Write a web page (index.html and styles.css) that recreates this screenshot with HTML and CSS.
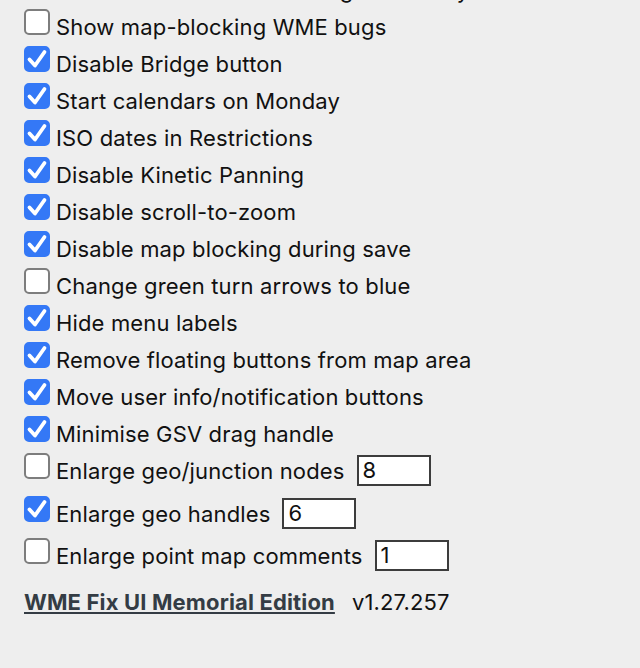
FILE: index.html
```html
<!DOCTYPE html>
<html>
<head>
<meta charset="utf-8">
<link rel="stylesheet" href="styles.css">
</head>
<body>
<div class="panel">
  <div class="row"><span class="box"></span><span class="label">Show unused WME ruler legend on key when hidden via the settings</span></div>
  <div class="row"><span class="box"></span><span class="label">Show map-blocking WME bugs</span></div>
  <div class="row"><span class="box on"><svg viewBox="0 0 26 26"><polyline points="5.5,13.5 11,19.5 20.5,6"/></svg></span><span class="label">Disable Bridge button</span></div>
  <div class="row"><span class="box on"><svg viewBox="0 0 26 26"><polyline points="5.5,13.5 11,19.5 20.5,6"/></svg></span><span class="label">Start calendars on Monday</span></div>
  <div class="row"><span class="box on"><svg viewBox="0 0 26 26"><polyline points="5.5,13.5 11,19.5 20.5,6"/></svg></span><span class="label">ISO dates in Restrictions</span></div>
  <div class="row"><span class="box on"><svg viewBox="0 0 26 26"><polyline points="5.5,13.5 11,19.5 20.5,6"/></svg></span><span class="label">Disable Kinetic Panning</span></div>
  <div class="row"><span class="box on"><svg viewBox="0 0 26 26"><polyline points="5.5,13.5 11,19.5 20.5,6"/></svg></span><span class="label">Disable scroll-to-zoom</span></div>
  <div class="row"><span class="box on"><svg viewBox="0 0 26 26"><polyline points="5.5,13.5 11,19.5 20.5,6"/></svg></span><span class="label">Disable map blocking during save</span></div>
  <div class="row"><span class="box"></span><span class="label">Change green turn arrows to blue</span></div>
  <div class="row"><span class="box on"><svg viewBox="0 0 26 26"><polyline points="5.5,13.5 11,19.5 20.5,6"/></svg></span><span class="label">Hide menu labels</span></div>
  <div class="row"><span class="box on"><svg viewBox="0 0 26 26"><polyline points="5.5,13.5 11,19.5 20.5,6"/></svg></span><span class="label">Remove floating buttons from map area</span></div>
  <div class="row"><span class="box on"><svg viewBox="0 0 26 26"><polyline points="5.5,13.5 11,19.5 20.5,6"/></svg></span><span class="label">Move user info/notification buttons</span></div>
  <div class="row"><span class="box on"><svg viewBox="0 0 26 26"><polyline points="5.5,13.5 11,19.5 20.5,6"/></svg></span><span class="label">Minimise GSV drag handle</span></div>
  <div class="row tall"><span class="box"></span><span class="label">Enlarge geo/junction nodes</span><span class="num">8</span></div>
  <div class="row tall"><span class="box on"><svg viewBox="0 0 26 26"><polyline points="5.5,13.5 11,19.5 20.5,6"/></svg></span><span class="label">Enlarge geo handles</span><span class="num">6</span></div>
  <div class="row tall"><span class="box"></span><span class="label">Enlarge point map comments</span><span class="num">1</span></div>
  <div class="footer"><a class="link" href="#">WME Fix UI Memorial Edition</a><span class="ver">v1.27.257</span></div>
</div>
</body>
</html>
```

FILE: styles.css
```css
html, body {
  margin: 0;
  padding: 0;
  background: #eeeeee;
}
body {
  font-family: Inter, "Open Sans", sans-serif;
  color: #111111;
  overflow: hidden;
}
.panel {
  padding-left: 24px;
  margin-top: -32px;
}
.row {
  display: flex;
  align-items: flex-start;
  height: 37px;
  white-space: nowrap;
}
.row.tall {
  height: 42.5px;
}
.box {
  flex: none;
  width: 26px;
  height: 26px;
  margin-top: 4px;
  box-sizing: border-box;
  border: 2px solid #7d7d7d;
  border-radius: 5px;
  background: #ffffff;
  display: flex;
}
.box.on {
  background: #3478f6;
  border-color: #3478f6;
}
.box svg {
  width: 26px;
  height: 26px;
  margin: -2px;
}
.box polyline {
  fill: none;
  stroke: #ffffff;
  stroke-width: 3.8;
  stroke-linecap: round;
  stroke-linejoin: round;
}
.label {
  margin-left: 6px;
  margin-top: 9px;
  font-size: 22px;
  letter-spacing: 0.15px;
  line-height: 26px;
}
.num {
  flex: none;
  margin-left: 12px;
  margin-top: 6px;
  width: 74px;
  height: 31px;
  box-sizing: border-box;
  border: 2px solid #3c3c3c;
  background: #ffffff;
  padding-left: 4px;
  font-size: 22px;
  line-height: 27px;
}
.footer {
  margin-top: 12px;
  font-size: 22px;
  letter-spacing: 0.15px;
  line-height: 26px;
  white-space: nowrap;
}
.link {
  color: #343c44;
  font-weight: 700;
  text-decoration: underline;
  text-decoration-thickness: 2px;
  text-underline-offset: 2px;
}
.ver {
  margin-left: 17px;
}
```
